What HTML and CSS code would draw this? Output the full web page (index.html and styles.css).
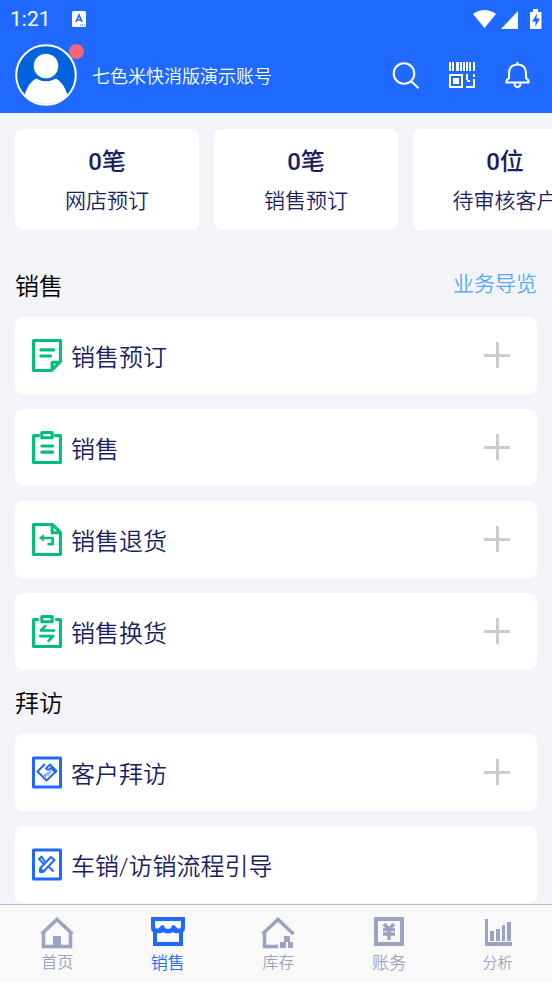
FILE: index.html
```html
<!DOCTYPE html>
<html lang="zh-CN">
<head>
<meta charset="utf-8">
<meta name="viewport" content="width=device-width, initial-scale=1">
<title>销售</title>
<link rel="stylesheet" href="styles.css">
</head>
<body>
<div class="app">
  <header class="header">
    <div class="status">
      <time class="clock">1:21</time>
      <svg class="input-badge" width="15" height="17" viewBox="0 0 15 17"><rect width="14" height="16" rx="1.5" fill="#fff"/><path d="M4 11 L7 4 L10 11 M5 9H9" fill="none" stroke="#1f69ff" stroke-width="1.6"/><path d="M8 14h1m1 0h1m1 0h1" stroke="#1f69ff" stroke-width="1.2"/></svg>
      <svg class="signals" width="70" height="20" viewBox="0 0 70 20" fill="#fff"><path d="M0 5Q11.500-3 23 5L11.500 19Z"/><path d="M28 20L45 2V20Z"/><path d="M57 3h3V0h5v3h3.500v17H57Z"/><path d="M64 4.500l-5 8h3.500v5l4.500-8h-3.500Z" fill="#1f69ff"/></svg>
    </div>
    <div class="profile">
      <button class="avatar" aria-label="账号">
        <svg width="62" height="62" viewBox="0 0 62 62"><circle cx="31" cy="31" r="29.800" fill="#0362dc" stroke="#fff" stroke-width="2"/><circle cx="31" cy="22" r="12.300" fill="#fff"/><path d="M9.500 51Q13 39 21 34.500Q31 40 41 34.500Q49 39 52.500 51A30 30 0 0 1 9.500 51Z" fill="#fff"/></svg>
        <span class="dot"></span>
      </button>
      <span class="account">七色米快消版演示账号</span>
      <div class="tools">
        <button aria-label="搜索"><svg width="28" height="28" viewBox="0 0 28 28" fill="none" stroke="#fff" stroke-width="2"><circle cx="12" cy="12.500" r="10.300"/><path d="M19 20L26.500 27.300"/></svg></button>
        <button aria-label="扫码"><svg width="28" height="28" viewBox="0 0 28 28"><path d="M1 1h2v9H1zM4 1h2v9H4zM8 1h3v9H8zM12 1h2v9h-2zM15 1h2v9h-2zM18 1h2v9h-2zM21 1h2v9h-2zM25 1h2v9h-2zM18 13h2v6h-2zM19 19h3v2h-3zM25 13h2v3h-2zM25 18h2v9h-9v-2h7z" fill="#fff"/><path d="M2 14h12v12H2z" fill="none" stroke="#fff" stroke-width="2"/><path d="M5 17h6v6H5z" fill="#fff"/></svg></button>
        <button aria-label="通知"><svg width="28" height="28" viewBox="0 0 28 28" fill="none" stroke="#fff" stroke-width="2"><path d="M13.500 1V4M5 17V12.500Q5 3.500 13.500 3.500T22 12.500V17L24.500 19.500V21.500H2.500V19.500Z"/><path d="M10.500 22q0 4 3 4t3-4"/></svg></button>
      </div>
    </div>
  </header>

  <main class="content">
    <ul class="stats">
      <li class="stat"><strong>0笔</strong><span>网店预订</span></li>
      <li class="stat"><strong>0笔</strong><span>销售预订</span></li>
      <li class="stat"><strong>0位</strong><span>待审核客户</span></li>
    </ul>

    <section>
      <div class="section-head first"><h2>销售</h2><a href="#guide">业务导览</a></div>
      <ul class="rows">
        <li class="row green"><svg width="30" height="33" viewBox="1 1 29 32"><path d="M2.500 2.500H28.500V23L20 31.500H2.500ZM28.500 23.500H20.500V31"/><path d="M9.500 11.500H22M9.500 17.500H19" stroke-linecap="round"/></svg><a href="#preorder">销售预订</a><button class="add" aria-label="新增销售预订"></button></li>
        <li class="row green"><svg width="30" height="33" viewBox="1 1 29 32"><path d="M8.500 5.500H2.500V31.500H28.500V5.500H22.500"/><path d="M10.500 2.500H20.500V7.500H10.500Z"/><path d="M10.500 15.500H21M10.500 21.500H21" stroke-linecap="round"/></svg><a href="#sale">销售</a><button class="add" aria-label="新增销售"></button></li>
        <li class="row green"><svg width="30" height="33" viewBox="1 1 29 32"><path d="M2.500 2.500H21L28.500 10V31.500H2.500ZM20.500 2.500V10.500H28.500"/><path d="M10 15.500H21V21.500H17" stroke-linecap="round" stroke-width="2.500"/><path class="solid" d="M7.500 15.500L12.500 12V19Z"/></svg><a href="#return">销售退货</a><button class="add" aria-label="新增销售退货"></button></li>
        <li class="row green"><svg width="30" height="33" viewBox="1 1 29 32"><path d="M7.500 5.500H2.500V31.500H28.500V5.500H23.500"/><path d="M10.500 2.500H20.500V7.500H10.500Z"/><path d="M14 11.500L9.500 16H22.500M9 21.500H21.500L17 26" stroke-linecap="round" stroke-width="2.500"/></svg><a href="#exchange">销售换货</a><button class="add" aria-label="新增销售换货"></button></li>
      </ul>
    </section>

    <section>
      <div class="section-head"><h2>拜访</h2></div>
      <ul class="rows">
        <li class="row blue"><svg width="30" height="33" viewBox="0 0 30 33"><path d="M1.500 2H28.500V31H1.500Z"/><path class="fine" d="M13 8L5.500 15.500L14.500 24.500L24.500 15L18 8.500L14 12.500Q16 15 19 12L23 16"/><path class="thin" d="M11 21.500l1.500-3M13.500 21l.5-4M16 20l0-4M18 18l0-4"/></svg><a href="#visit">客户拜访</a><button class="add" aria-label="新增客户拜访"></button></li>
        <li class="row blue"><svg width="30" height="33" viewBox="0 0 30 33"><path d="M1.500 2H28.500V31H1.500Z"/><path class="fine" d="M19 9L22.500 12L11.500 23.500L8 20.500ZM8 20.500V24H11.500M13 13.500L9.500 8.500L7 11L11.500 15.500M16.500 18.500L21.500 23.500"/></svg><a href="#flow">车销/访销流程引导</a></li>
      </ul>
    </section>
  </main>

  <nav class="tabs">
    <a href="#home"><svg width="34" height="32" viewBox="0 0 34 32"><path d="M1.500 17L17 2.500L32.500 17M3.500 15V29.500H30.500V15" fill="none" stroke="currentColor" stroke-width="3.500"/><path d="M13 19h8v10h-8z"/></svg><span class="small">首页</span></a>
    <a href="#sales" class="active" aria-current="page"><svg width="34" height="32" viewBox="0 0 34 32"><path d="M0 0H34V11Q34 14 32 15V29H2V15Q0 14 0 11ZM4 4V10Q5 13 8 11Q10 8 12 8Q13 8 14 11Q17 13 20 11Q21 8 22 8Q24 8 26 11Q29 13 30 10V4ZM6 16V25H28V16Q24 17 22 15Q17 18 12 15Q10 17 6 16Z" fill-rule="evenodd"/></svg><span>销售</span></a>
    <a href="#stock"><svg width="34" height="32" viewBox="0 0 34 32"><path d="M1.500 17L17 2.500L32.500 17M3.500 15V29.500H17" fill="none" stroke="currentColor" stroke-width="3.500"/><path d="M23 19h6v6h-6zM19 25h6v6h-6zM27 25h5v6h-5z"/></svg><span class="small">库存</span></a>
    <a href="#accounts"><svg width="34" height="32" viewBox="0 0 34 32"><path d="M4 2H30V27H4Z" fill="none" stroke="currentColor" stroke-width="4"/><path d="M12 7L17 12L22 7M17 11V23M11 12.500H23M11 17H23" fill="none" stroke="currentColor" stroke-width="3.500"/></svg><span>账务</span></a>
    <a href="#analysis"><svg width="34" height="32" viewBox="0 0 34 32"><path d="M4 2h3v23h24v4H4zM9 14h4v10H9zM15 12h4v12h-4zM21 8h3v16h-3zM26 5h4v19h-4z"/></svg><span class="smaller">分析</span></a>
  </nav>
</div>
</body>
</html>
```
FILE: styles.css
```css
* { box-sizing: border-box; }
body { margin: 0; background: #f3f4fa; color: #1b1e60; font-family: Roboto, "Noto Sans CJK SC", sans-serif; font-weight: 350; }
ul { list-style: none; margin: 0; padding: 0; }
a { color: inherit; text-decoration: none; }
button { background: none; border: 0; padding: 0; cursor: pointer; }
svg { display: block; flex: none; }
.app { height: 100vh; display: flex; flex-direction: column; overflow: hidden; }

.header { flex: none; background: #1f69ff; color: #fff; padding-bottom: 7px; }
.status { display: flex; align-items: center; height: 38px; padding: 0 9px 0 10px; }
.clock { font-size: 21px; font-weight: 400; }
.input-badge { margin-left: 21px; }
.signals { margin-left: auto; }
.profile { display: flex; align-items: center; height: 68px; padding: 6px 20px 0 15px; }
.avatar { position: relative; }
.dot { position: absolute; top: 0; right: -7px; width: 15px; height: 15px; border-radius: 50%; background: #fa6373; }
.account { margin-left: 15px; font-size: 18px; }
.tools { display: flex; gap: 28px; margin-left: auto; }

.content { flex: 1; min-height: 0; overflow: hidden; padding: 16px 15px 0; }
.stats { display: flex; gap: 15px; overflow: hidden; margin-right: -15px; }
.stat { flex: none; width: 184px; padding: 15px 0 13px; border-radius: 8px; background: #fff; display: flex; flex-direction: column; align-items: center; gap: 5px; }
.stat strong { font-size: 24px; line-height: 36px; font-weight: 500; }
.stat span { font-size: 21px; line-height: 32px; }

.section-head { display: flex; justify-content: space-between; align-items: center; height: 64px; padding-bottom: 2px; }
.section-head.first { margin-top: 23px; }
.section-head h2 { margin: 0; color: #000; font-size: 24px; font-weight: inherit; }
.section-head a { padding-bottom: 4px; color: #55aafa; font-size: 21px; }
.rows { display: grid; gap: 15px; }
.row { display: flex; align-items: center; height: 77px; padding: 0 27px 1px 17px; border-radius: 8px; background: #fff; font-size: 24px; }
.row a { flex: 1; margin-left: 9px; }
.row svg { fill: none; stroke: currentColor; stroke-width: 3; stroke-linejoin: round; }
.row .fine { stroke-width: 2; }
.row .thin { stroke-width: 1; }
.row .solid { fill: currentColor; stroke: none; }
.green svg { color: #00bd79; }
.blue svg { color: #1f69ff; }
.add { width: 26px; height: 26px; background: linear-gradient(#ccc, #ccc) center / 26px 3px no-repeat, linear-gradient(#ccc, #ccc) center / 3px 26px no-repeat; }

.tabs { flex: none; display: grid; grid-template-columns: repeat(4, 29fr) 28fr; height: 79px; padding: 12px 1px 0 2px; border-top: 1px solid #bbb; background: #f9f9f9; color: #9ca2c2; }
.tabs a { display: flex; flex-direction: column; align-items: center; gap: 2px; font-size: 17px; line-height: 24px; }
.tabs svg { fill: currentColor; }
.tabs .small { font-size: 16px; }
.tabs .smaller { font-size: 15px; }
.tabs .active { color: #1f69ff; }
```
